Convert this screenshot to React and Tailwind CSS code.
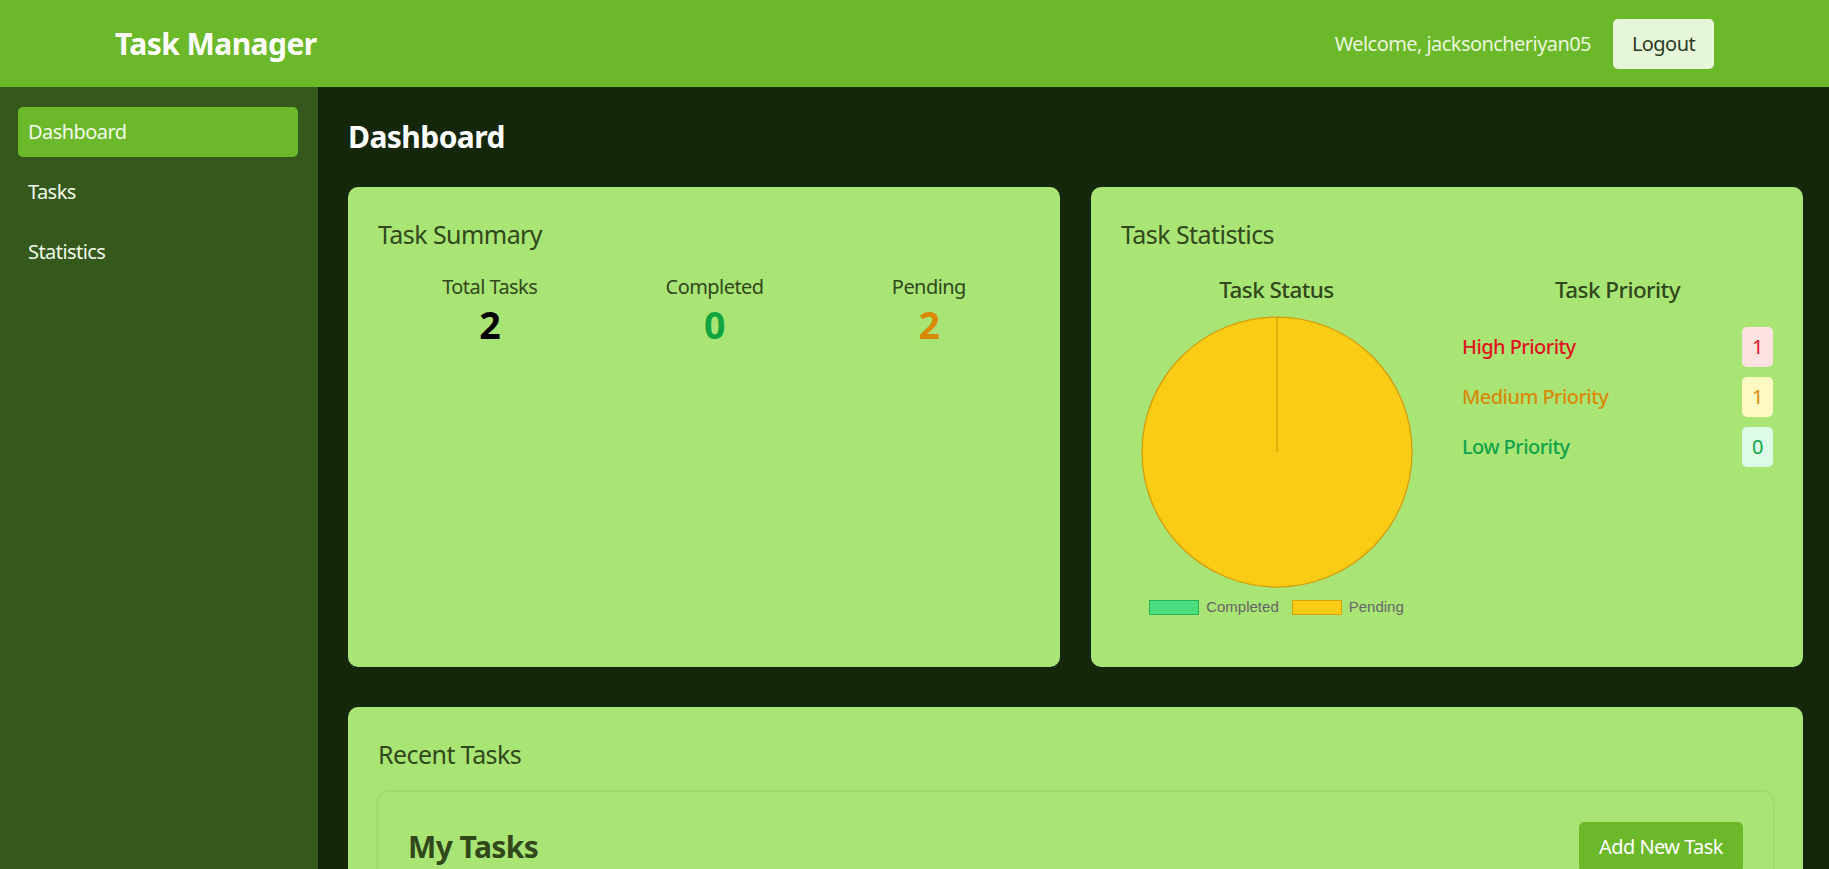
import React from "react"

const navItems = ["Dashboard", "Tasks", "Statistics"]

const summary = [
  { label: "Total Tasks", value: 2, color: "text-black" },
  { label: "Completed", value: 0, color: "text-[#12a53f]" },
  { label: "Pending", value: 2, color: "text-[#d88a06]" },
]

const priorities = [
  { label: "High Priority", count: 1, text: "text-[#e0141f]", badge: "bg-[#fee2e2] text-[#e0141f]" },
  { label: "Medium Priority", count: 1, text: "text-[#d88a0a]", badge: "bg-[#fef9c3] text-[#d88a0a]" },
  { label: "Low Priority", count: 0, text: "text-[#12a34a]", badge: "bg-[#dcfce7] text-[#12a34a]" },
]

function StatusPie() {
  return (
    <div className="flex flex-col items-center">
      <svg width="272" height="272" viewBox="0 0 272 272" className="mt-[9px]">
        <circle cx="136" cy="136" r="135" fill="#facc15" stroke="#d49c0a" strokeWidth="1.25" />
        <line x1="136" y1="136" x2="136" y2="1" stroke="#d49c0a" strokeWidth="1.25" />
      </svg>
      <div className="mt-[8px] flex items-center font-['Liberation_Sans',Arial,sans-serif] text-[15px] tracking-normal text-[#666666]">
        <span className="h-[15px] w-[50px] border-[1.5px] border-[#22b455] bg-[#4ade80]"></span>
        <span className="ml-[7px] mr-[13px]">Completed</span>
        <span className="h-[15px] w-[50px] border-[1.5px] border-[#d9a20a] bg-[#facc15]"></span>
        <span className="ml-[7px]">Pending</span>
      </div>
    </div>
  )
}

export default function App() {
  return (
    <div className="flex h-screen flex-col overflow-hidden bg-[#15270a] font-['Noto_Sans',sans-serif] tracking-[-0.035em]">
      {/* header */}
      <header className="flex h-[87px] shrink-0 items-center justify-between bg-[#6bb82b] px-[115px]">
        <h1 className="text-[30px] font-bold text-white">Task Manager</h1>
        <div className="flex items-center gap-[22px]">
          <span className="text-[20px] text-[#eaf7dc]">Welcome, jacksoncheriyan05</span>
          <button className="h-[50px] w-[101px] rounded-[5px] bg-[#e6f6d8] text-[20px] text-[#2c3a1f]">
            Logout
          </button>
        </div>
      </header>

      <div className="flex min-h-0 flex-1">
        {/* sidebar */}
        <aside className="w-[318px] shrink-0 bg-[#35581d] pl-[18px] pr-[20px] pt-[20px]">
          {navItems.map((item, i) => (
            <div
              key={item}
              className={`mb-[10px] flex h-[50px] items-center rounded-[5px] px-[10px] text-[20px] text-[#f1fae8] ${
                i === 0 ? "bg-[#6bb82b]" : ""
              }`}
            >
              {item}
            </div>
          ))}
        </aside>

        {/* main */}
        <main className="flex-1 pl-[30px] pr-[26px] pt-[30px]">
          <h2 className="mb-[30px] text-[30px] font-bold leading-[40px] text-white">Dashboard</h2>

          <div className="grid grid-cols-2 gap-[31px]">
            <section className="h-[480px] rounded-[10px] bg-[#a9e575] p-[30px] text-[#30481a]">
              <h3 className="text-[25px] leading-[35px]">Task Summary</h3>
              <div className="mt-[20px] flex justify-around">
                {summary.map((s) => (
                  <div key={s.label} className="flex flex-col items-center">
                    <span className="text-[20px] leading-[30px]">{s.label}</span>
                    <span className={`text-[37.5px] font-bold leading-[45px] ${s.color}`}>{s.value}</span>
                  </div>
                ))}
              </div>
            </section>

            <section className="h-[480px] rounded-[10px] bg-[#a9e575] p-[30px] text-[#30481a]">
              <h3 className="text-[25px] leading-[35px]">Task Statistics</h3>
              <div className="mt-[20px] grid grid-cols-2 gap-[30px]">
                <div className="flex flex-col items-center">
                  <h4 className="text-[22.5px] font-medium leading-[35px]">Task Status</h4>
                  <StatusPie />
                </div>
                <div>
                  <h4 className="text-center text-[22.5px] font-medium leading-[35px]">Task Priority</h4>
                  <div className="mt-[20px] flex flex-col gap-[10px]">
                    {priorities.map((p) => (
                      <div key={p.label} className="flex h-[40px] items-center justify-between">
                        <span className={`text-[20px] font-medium ${p.text}`}>{p.label}</span>
                        <span className={`flex h-[40px] w-[31px] items-center justify-center rounded-[5px] text-[20px] ${p.badge}`}>
                          {p.count}
                        </span>
                      </div>
                    ))}
                  </div>
                </div>
              </div>
            </section>
          </div>

          <section className="mt-[40px] rounded-[10px] bg-[#a9e575] p-[30px] text-[#30481a]">
            <h3 className="text-[25px] leading-[35px]">Recent Tasks</h3>
            <div className="mt-[20px] rounded-[10px] bg-[#a9e575] p-[30px] shadow-[0_0_3px_rgba(60,100,20,0.25)]">
              <div className="flex items-center justify-between">
                <h2 className="text-[30px] font-bold leading-[40px] text-[#30481a]">My Tasks</h2>
                <button className="h-[50px] w-[164px] rounded-[5px] bg-[#6bb82b] text-[20px] text-white">
                  Add New Task
                </button>
              </div>
              <div className="h-[200px]"></div>
            </div>
          </section>
        </main>
      </div>
    </div>
  )
}
